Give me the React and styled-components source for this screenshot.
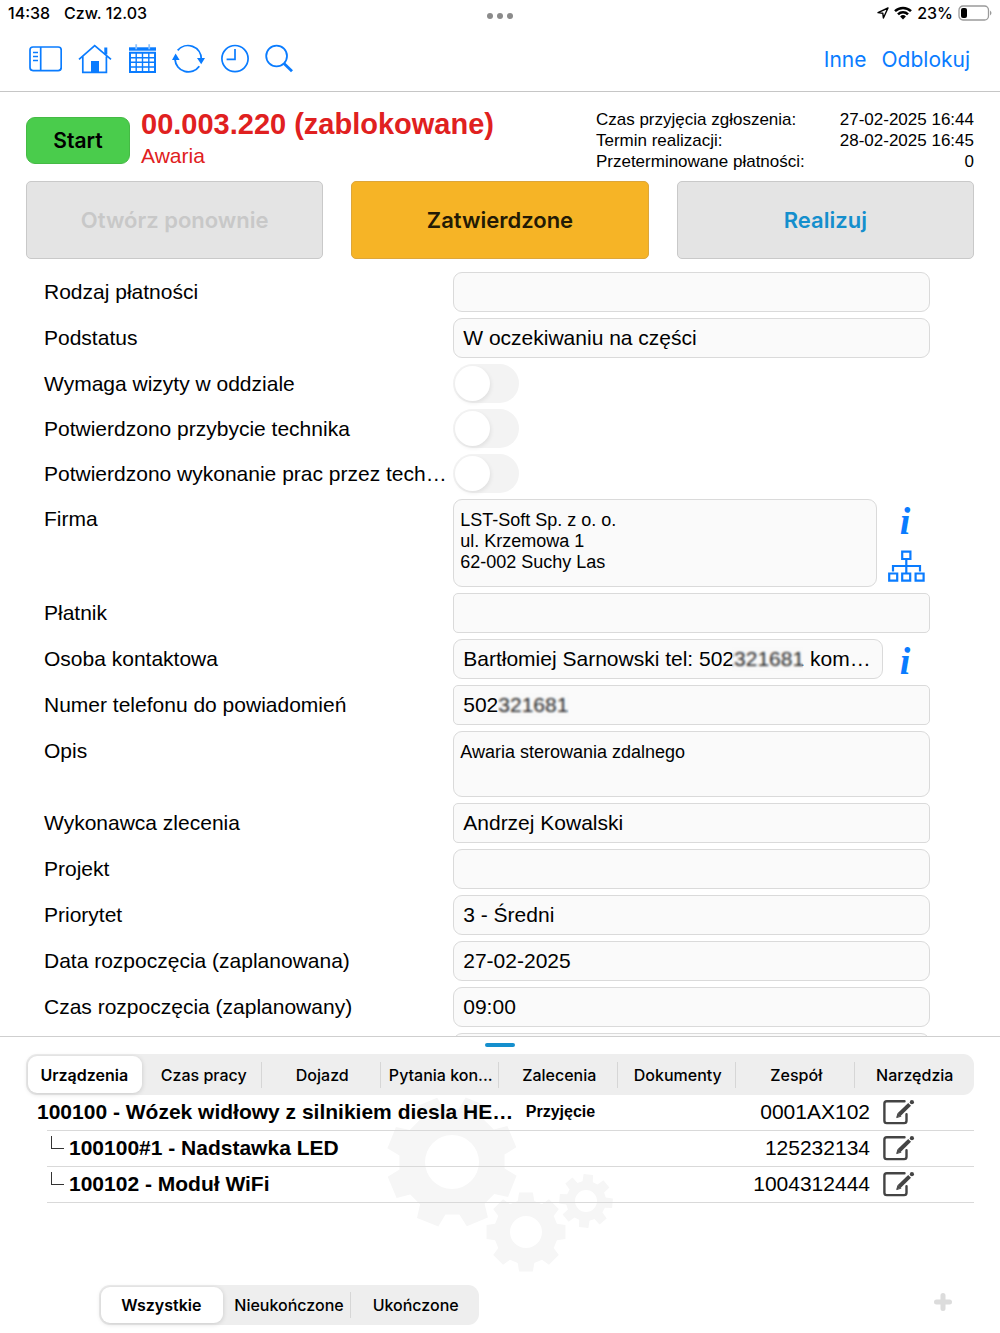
import React, { useState } from 'react'
import styled, { createGlobalStyle } from 'styled-components'

const helvetica = '"Liberation Sans", Arial, sans-serif'
const system = 'Inter, Roboto, sans-serif'

const tabs = ['Urządzenia', 'Czas pracy', 'Dojazd', 'Pytania kon...', 'Zalecenia', 'Dokumenty', 'Zespół', 'Narzędzia']
const filters = ['Wszystkie', 'Nieukończone', 'Ukończone']

const devices = [
  { id: 1, name: '100100 - Wózek widłowy z silnikiem diesla HE…', status: 'Przyjęcie', serial: '0001AX102', child: false },
  { id: 2, name: '100100#1 - Nadstawka LED', status: '', serial: '125232134', child: true },
  { id: 3, name: '100102 - Moduł WiFi', status: '', serial: '1004312444', child: true },
]

function gearPath(cx, cy, root, tip, hole, turn) {
  const points = []
  for (let i = 0; i < 8; i++) {
    const mid = turn + i * 45
    const corners = [[-15, root], [-10, tip], [10, tip], [15, root]]
    corners.forEach(([angle, r]) => {
      const a = ((mid + angle) * Math.PI) / 180
      points.push(`${(cx + r * Math.cos(a)).toFixed(1)} ${(cy + r * Math.sin(a)).toFixed(1)}`)
    })
  }
  return `M${points.join('L')}Z M${cx - hole} ${cy}a${hole} ${hole} 0 1 0 ${hole * 2} 0a${hole} ${hole} 0 1 0 ${-hole * 2} 0Z`
}

function SidebarIcon() {
  return (
    <svg width="33" height="30" viewBox="29 44 33 30" fill="none" stroke="currentColor" strokeWidth="1.7">
      <rect x="30" y="47" width="31.2" height="23.6" rx="3" />
      <path d="M40.7 47v23.6M33 52.5h5M33 56.5h5M33 60.5h5" />
    </svg>
  )
}

function HomeIcon() {
  return (
    <svg width="34" height="30" viewBox="79 44 34 30" fill="none" stroke="currentColor" strokeWidth="1.7">
      <path d="M80 59.3 95.7 45.5 112 59.3M83.8 56.5v15.9h23.6V56.5" />
      <path d="M106.8 47.5v7" strokeWidth="3" />
      <path d="M92 61h8v12h-8z" fill="currentColor" stroke="none" />
    </svg>
  )
}

function CalendarIcon() {
  return (
    <svg width="28" height="30" viewBox="128 44 28 30" fill="none" stroke="currentColor">
      <path d="M129 49h27" strokeWidth="3.4" />
      <path d="M136.2 44.3v5M149.2 44.3v5" stroke="#8cc3ff" strokeWidth="1.8" />
      <path d="M130 52.7h25v19.2h-25z" strokeWidth="2" />
      <path d="M136.2 52v20M142.5 52v20M148.8 52v20M130 57.7h25M130 62.3h25M130 67h25" strokeWidth="1.4" />
    </svg>
  )
}

function SyncIcon() {
  return (
    <svg width="33" height="30" viewBox="172 44 33 30" fill="none" stroke="currentColor" strokeWidth="1.8">
      <path d="M177.7 50.3a13.4 13.4 0 0 1 23.6 8.7M199.3 66.3A13.4 13.4 0 0 1 175 59.4" />
      <path d="M172 60h7.6L175.6 53.5zM197 58h8L201.2 64.3z" fill="currentColor" stroke="none" />
    </svg>
  )
}

function ClockIcon() {
  return (
    <svg width="28" height="30" viewBox="221 44 28 30" fill="none" stroke="currentColor" strokeWidth="1.7">
      <circle cx="235" cy="58.6" r="13.1" />
      <path d="M235 49v10.4h-8.4" />
    </svg>
  )
}

function SearchIcon() {
  return (
    <svg width="28" height="30" viewBox="265 44 28 30" fill="none" stroke="currentColor" strokeWidth="1.8">
      <circle cx="276.6" cy="56" r="10.4" />
      <path d="m284 63.4 8 7.8" strokeWidth="2.8" />
    </svg>
  )
}

function TreeIcon() {
  return (
    <svg width="37" height="32" viewBox="888 550 37 32" fill="none" stroke="currentColor" strokeWidth="2.2">
      <path d="M902.2 551.6h8.2v7.4h-8.2zM889.2 573.5h8v7.2h-8zM902.2 573.5h8v7.2h-8zM915.6 573.5h8v7.2h-8z" />
      <path d="M906.3 559v14M893 571.5V566h27v5.5" />
    </svg>
  )
}

function EditIcon() {
  return (
    <svg width="32" height="26" viewBox="883 1098 32 26" fill="none" stroke="#444" strokeWidth="2.4" strokeLinecap="round">
      <path d="M904.5 1100.3h-17.7a2.4 2.4 0 0 0-2.4 2.4v17a2.4 2.4 0 0 0 2.4 2.4h17.3a2.4 2.4 0 0 0 2.4-2.4v-6.4" />
      <path d="m909.6 1103.4-10.4 10.1" strokeWidth="4" strokeLinecap="butt" />
      <path d="m896.8 1116.2 1.2-3.8 2.6 2.6z" fill="#444" strokeWidth="1" />
      <circle cx="911.9" cy="1101.2" r="2.1" fill="#444" stroke="none" />
    </svg>
  )
}

function Row({ id, label, kind, children }) {
  return (
    <FormRow $kind={kind}>
      <label htmlFor={id}>{label}</label>
      <Control>{children}</Control>
    </FormRow>
  )
}

function App() {
  const [tab, setTab] = useState(tabs[0])
  const [filter, setFilter] = useState(filters[0])

  return (
    <Page>
      <GlobalStyle />
      <StatusBar>
        <div className="side">
          <span>14:38</span>
          <span>Czw. 12.03</span>
        </div>
        <svg width="28" height="8" viewBox="0 0 28 8" fill="#8b8b8b">
          <circle cx="4" cy="4" r="3" />
          <circle cx="14" cy="4" r="3" />
          <circle cx="24" cy="4" r="3" />
        </svg>
        <div className="side right">
          <svg width="12" height="12" viewBox="0 0 12 12" fill="none" stroke="#000" strokeWidth="1.4" strokeLinejoin="round">
            <path d="M11 1 1 5.6l4.8.6.6 4.8z" />
          </svg>
          <svg width="18" height="14" viewBox="0 0 18 14" fill="none" stroke="#000" strokeWidth="2.5">
            <path d="M1 5.2a11.5 11.5 0 0 1 16 0M4 8.4a7 7 0 0 1 10 0" />
            <path d="m9 13.5-2.9-3a4.1 4.1 0 0 1 5.8 0z" fill="#000" stroke="none" />
          </svg>
          <span>23%</span>
          <svg width="34" height="16" viewBox="0 0 34 16">
            <rect x="1" y="1" width="29.5" height="14" rx="4" fill="none" stroke="#9a9a9a" strokeWidth="1.3" />
            <rect x="3" y="3" width="6" height="10" rx="2" />
            <path d="M32 5.5q3 2.5 0 5z" fill="#9a9a9a" />
          </svg>
        </div>
      </StatusBar>

      <Toolbar>
        <div className="icons">
          <IconButton aria-label="Panel boczny"><SidebarIcon /></IconButton>
          <IconButton aria-label="Start"><HomeIcon /></IconButton>
          <IconButton aria-label="Kalendarz"><CalendarIcon /></IconButton>
          <IconButton aria-label="Synchronizuj"><SyncIcon /></IconButton>
          <IconButton aria-label="Historia"><ClockIcon /></IconButton>
          <IconButton aria-label="Szukaj"><SearchIcon /></IconButton>
        </div>
        <div className="links">
          <TextButton>Inne</TextButton>
          <TextButton>Odblokuj</TextButton>
        </div>
      </Toolbar>

      <OrderHeader>
        <StartButton>Start</StartButton>
        <div className="title">
          <h1>00.003.220 (zablokowane)</h1>
          <p>Awaria</p>
        </div>
        <dl>
          <dt>Czas przyjęcia zgłoszenia:</dt>
          <dd>27-02-2025 16:44</dd>
          <dt>Termin realizacji:</dt>
          <dd>28-02-2025 16:45</dd>
          <dt>Przeterminowane płatności:</dt>
          <dd>0</dd>
        </dl>
      </OrderHeader>

      <Actions>
        <ActionButton $color="#c8c8c8" disabled>Otwórz ponownie</ActionButton>
        <ActionButton $color="#231a05" $bg="#f6b426" $border="#dda63a">Zatwierdzone</ActionButton>
        <ActionButton $color="#158fcd">Realizuj</ActionButton>
      </Actions>

      <Form>
        <Row id="platnosc" label="Rodzaj płatności">
          <Input id="platnosc" />
        </Row>
        <Row id="podstatus" label="Podstatus">
          <Input id="podstatus" defaultValue="W oczekiwaniu na części" />
        </Row>
        <Row id="wizyta" label="Wymaga wizyty w oddziale" kind="switch">
          <Switch id="wizyta" type="checkbox" />
        </Row>
        <Row id="przybycie" label="Potwierdzono przybycie technika" kind="switch">
          <Switch id="przybycie" type="checkbox" />
        </Row>
        <Row id="wykonanie" label="Potwierdzono wykonanie prac przez tech…" kind="switch">
          <Switch id="wykonanie" type="checkbox" />
        </Row>
        <Row id="firma" label="Firma" kind="company">
          <TextArea id="firma" defaultValue={'LST-Soft Sp. z o. o.\nul. Krzemowa 1\n62-002 Suchy Las'} />
          <SideIcons $gap={11}>
            <InfoButton type="button" aria-label="Informacje o firmie">i</InfoButton>
            <IconButton type="button" aria-label="Struktura firmy"><TreeIcon /></IconButton>
          </SideIcons>
        </Row>
        <Row id="platnik" label="Płatnik">
          <Input id="platnik" $square />
        </Row>
        <Row id="osoba" label="Osoba kontaktowa">
          <Input id="osoba" defaultValue="Bartłomiej Sarnowski tel: 502321681 kom…" />
          <Mask $left={279} />
          <SideIcons $gap={5}>
            <InfoButton type="button" aria-label="Informacje o osobie">i</InfoButton>
          </SideIcons>
        </Row>
        <Row id="telefon" label="Numer telefonu do powiadomień">
          <Input id="telefon" $square defaultValue="502321681" />
          <Mask $left={45} />
        </Row>
        <Row id="opis" label="Opis" kind="note">
          <TextArea id="opis" defaultValue="Awaria sterowania zdalnego" />
        </Row>
        <Row id="wykonawca" label="Wykonawca zlecenia">
          <Input id="wykonawca" $square defaultValue="Andrzej Kowalski" />
        </Row>
        <Row id="projekt" label="Projekt">
          <Input id="projekt" />
        </Row>
        <Row id="priorytet" label="Priorytet">
          <Input id="priorytet" defaultValue="3 - Średni" />
        </Row>
        <Row id="data" label="Data rozpoczęcia (zaplanowana)">
          <Input id="data" defaultValue="27-02-2025" />
        </Row>
        <Row id="czas" label="Czas rozpoczęcia (zaplanowany)">
          <Input id="czas" defaultValue="09:00" />
        </Row>
        <Row id="nastepne" label="">
          <Input id="nastepne" />
        </Row>
      </Form>

      <Panel>
        <Handle />
        <Segments className="tabs">
          {tabs.map((name) => (
            <Segment key={name} $active={name === tab} onClick={() => setTab(name)}>
              <span>{name}</span>
            </Segment>
          ))}
        </Segments>
        <DeviceArea>
          <Gears width="230" height="178" viewBox="386 1095 230 178" fill="#f6f6f6" fillRule="evenodd">
            <path d={gearPath(452, 1162, 53, 66, 27, 22)} />
            <path d={gearPath(526, 1232, 32, 40, 16, 0)} />
            <path d={gearPath(586, 1201, 20, 27, 11, 5)} />
          </Gears>
          <DeviceTable>
            <colgroup>
              <col className="name" />
              <col />
              <col />
              <col className="edit" />
            </colgroup>
            <tbody>
              {devices.map((device) => {
                const { id, name, status, serial, child } = device
                return (
                  <tr key={id}>
                    <td>
                      <DeviceName $child={child}>{name}</DeviceName>
                    </td>
                    <td className="status">{status}</td>
                    <td className="serial">{serial}</td>
                    <td className="edit">
                      <IconButton aria-label="Edytuj"><EditIcon /></IconButton>
                    </td>
                  </tr>
                )
              })}
            </tbody>
          </DeviceTable>
        </DeviceArea>
        <Footer>
          <Segments className="filters">
            {filters.map((name) => (
              <Segment key={name} $active={name === filter} onClick={() => setFilter(name)}>
                <span>{name}</span>
              </Segment>
            ))}
          </Segments>
          <IconButton className="add" aria-label="Dodaj">
            <svg width="18" height="18" viewBox="0 0 18 18" stroke="#dcdcdc" strokeWidth="5" strokeLinecap="round">
              <path d="M9 2.5v13M2.5 9h13" />
            </svg>
          </IconButton>
        </Footer>
      </Panel>
    </Page>
  )
}

const GlobalStyle = createGlobalStyle`
  * {
    box-sizing: border-box;
  }
  body {
    margin: 0;
    background: #fff;
    color: #000;
    font-family: ${helvetica};
  }
  button {
    font-family: inherit;
    padding: 0;
    border: 0;
    background: none;
    cursor: pointer;
  }
  svg {
    display: block;
    flex-shrink: 0;
  }
`

const Page = styled.div`
  display: flex;
  flex-direction: column;
  height: 100vh;
`

const StatusBar = styled.div`
  display: grid;
  grid-template-columns: 1fr auto 1fr;
  align-items: center;
  height: 25px;
  padding: 0 8px;
  font-family: ${system};
  font-size: 16px;
  font-weight: 500;
  > svg {
    margin-top: 7px;
  }
  .side {
    display: flex;
    align-items: center;
    gap: 14px;
  }
  .right {
    justify-content: flex-end;
    gap: 5px;
  }
`

const Toolbar = styled.header`
  display: flex;
  justify-content: space-between;
  align-items: center;
  height: 67px;
  padding: 2px 30px 0 29px;
  border-bottom: 1px solid #c6c6c6;
  .icons {
    display: flex;
    gap: 16px;
  }
  .links {
    display: flex;
    gap: 15px;
  }
`

const IconButton = styled.button`
  display: block;
  color: #0a7cff;
`

const TextButton = styled.button`
  color: #0a7cff;
  font-family: ${system};
  font-size: 21px;
`

const OrderHeader = styled.section`
  display: flex;
  align-items: flex-start;
  padding: 17px 26px 9px;
  .title {
    flex: 1;
    padding-left: 11px;
    color: #e02020;
  }
  h1 {
    margin: 0;
    font-size: 29px;
    line-height: 31px;
  }
  p {
    margin: 0;
    font-size: 21px;
    line-height: 31px;
  }
  dl {
    display: grid;
    grid-template-columns: auto auto;
    column-gap: 35px;
    margin: 0;
    font-size: 17px;
    line-height: 21px;
  }
  dd {
    margin: 0;
    text-align: right;
  }
`

const StartButton = styled.button`
  width: 104px;
  height: 47px;
  margin-top: 8px;
  border: 1px solid #45ba45;
  border-radius: 9px;
  background: #4acc4c;
  font-family: ${system};
  font-size: 21px;
  font-weight: 600;
`

const Actions = styled.div`
  display: grid;
  grid-template-columns: repeat(3, 1fr);
  gap: 28px;
  padding: 0 26px;
`

const ActionButton = styled.button`
  height: 78px;
  border: 1px solid ${(props) => props.$border || '#c9c9c9'};
  border-radius: 5px;
  background: ${(props) => props.$bg || '#e4e4e4'};
  color: ${(props) => props.$color};
  font-family: ${system};
  font-size: 22px;
  font-weight: 600;
`

const Form = styled.form`
  display: flex;
  flex-direction: column;
  gap: 6px;
  flex: 1;
  min-height: 0;
  overflow-y: auto;
  scrollbar-width: none;
  padding: 13px 70px 0 44px;
  font-size: 21px;
`

const rowHeights = { switch: 39, company: 88, note: 66 }

const FormRow = styled.div`
  display: grid;
  grid-template-columns: minmax(0, 5fr) minmax(0, 6fr);
  grid-template-rows: 100%;
  column-gap: 12px;
  flex-shrink: 0;
  height: ${(props) => rowHeights[props.$kind] || 40}px;
  label {
    line-height: 40px;
    white-space: nowrap;
  }
`

const Control = styled.div`
  display: flex;
  position: relative;
`

const Input = styled.input`
  flex: 1;
  min-width: 0;
  padding: 0 9px;
  border: 1px solid #dadada;
  border-radius: ${(props) => (props.$square ? 5 : 9)}px;
  background: #fafafa;
  color: #000;
  font: inherit;
  text-overflow: ellipsis;
`

const TextArea = styled.textarea`
  flex: 1;
  min-width: 0;
  padding: 10px 6px 0;
  border: 1px solid #dadada;
  border-radius: 9px;
  background: #fafafa;
  color: #000;
  font-family: inherit;
  font-size: 18px;
  line-height: 21px;
  resize: none;
`

const Switch = styled.input`
  appearance: none;
  width: 66px;
  margin: 0;
  padding: 2px;
  border-radius: 20px;
  background: #f3f3f3;
  &::before {
    content: '';
    display: block;
    width: 35px;
    height: 35px;
    border-radius: 50%;
    background: #fff;
    box-shadow: 1px 2px 4px rgba(0, 0, 0, 0.08);
  }
  &:checked {
    background: #4acc4c;
  }
  &:checked::before {
    margin-left: auto;
  }
`

const Mask = styled.span`
  position: absolute;
  top: 8px;
  left: ${(props) => props.$left}px;
  width: 71px;
  height: 24px;
  background: rgba(250, 250, 250, 0.15);
  backdrop-filter: blur(1px);
`

const SideIcons = styled.div`
  display: flex;
  flex-direction: column;
  align-items: center;
  gap: 6px;
  width: 37px;
  margin-left: ${(props) => props.$gap}px;
  margin-right: 5px;
`

const InfoButton = styled.button`
  flex-shrink: 0;
  height: 45px;
  padding-right: 3px;
  color: #0a7cff;
  font-family: 'Liberation Serif', serif;
  font-size: 38px;
  font-style: italic;
  font-weight: 700;
  line-height: 45px;
`

const Panel = styled.section`
  display: flex;
  flex-direction: column;
  padding: 6px 26px 8px;
  border-top: 1px solid #cfcfcf;
  .tabs {
    height: 41px;
  }
  .filters {
    width: 380px;
    height: 40px;
  }
`

const Handle = styled.div`
  align-self: center;
  width: 30px;
  height: 4px;
  margin-bottom: 7px;
  border-radius: 2px;
  background: #158fcd;
`

const Segments = styled.div`
  display: grid;
  grid-auto-flow: column;
  grid-auto-columns: minmax(0, 1fr);
  padding: 2px 0;
  border-radius: 11px;
  background: #eee;
`

const Segment = styled.button`
  display: flex;
  align-items: center;
  padding: 0 1px 0 2px;
  color: #000;
  font-family: ${system};
  font-size: 16px;
  font-weight: ${(props) => (props.$active ? 600 : 500)};
  span {
    display: grid;
    place-items: center;
    flex: 1;
    height: ${(props) => (props.$active ? '100%' : '26px')};
    margin-right: ${(props) => (props.$active ? 2 : 0)}px;
    border-right: 1px solid ${(props) => (props.$active ? '#fff' : '#d6d6d6')};
    border-radius: ${(props) => (props.$active ? 9 : 0)}px;
    background: ${(props) => (props.$active ? '#fff' : 'none')};
    box-shadow: ${(props) => (props.$active ? '0 1px 5px rgba(0, 0, 0, 0.16)' : 'none')};
    white-space: nowrap;
  }
  &:last-child span {
    border-right-color: transparent;
  }
`

const DeviceArea = styled.div`
  position: relative;
  min-height: 190px;
  padding-left: 21px;
`

const Gears = styled.svg`
  position: absolute;
  top: 0;
  left: 50%;
  margin-left: -114px;
`

const DeviceTable = styled.table`
  position: relative;
  width: 100%;
  table-layout: fixed;
  border-collapse: collapse;
  font-size: 21px;
  .name {
    width: 51%;
  }
  .edit {
    width: 104px;
    padding-left: 13px;
  }
  td {
    height: 36px;
    padding: 0;
    border-bottom: 1px solid #d9d9d9;
  }
  tr:first-child td {
    height: 35px;
  }
  .status {
    padding-left: 6px;
    font-size: 16px;
    font-weight: 700;
  }
  .serial {
    text-align: right;
  }
`

const DeviceName = styled.div`
  display: flex;
  gap: 5px;
  margin-left: ${(props) => (props.$child ? 4 : -10)}px;
  font-weight: 700;
  white-space: nowrap;
  &::before {
    content: '';
    display: ${(props) => (props.$child ? 'block' : 'none')};
    width: 12px;
    height: 12px;
    border: solid #333;
    border-width: 0 0 1px 1px;
  }
`

const Footer = styled.div`
  display: flex;
  justify-content: space-between;
  padding: 0 22px 0 73px;
  .add {
    align-self: flex-start;
    padding-top: 8px;
  }
`

export default App
